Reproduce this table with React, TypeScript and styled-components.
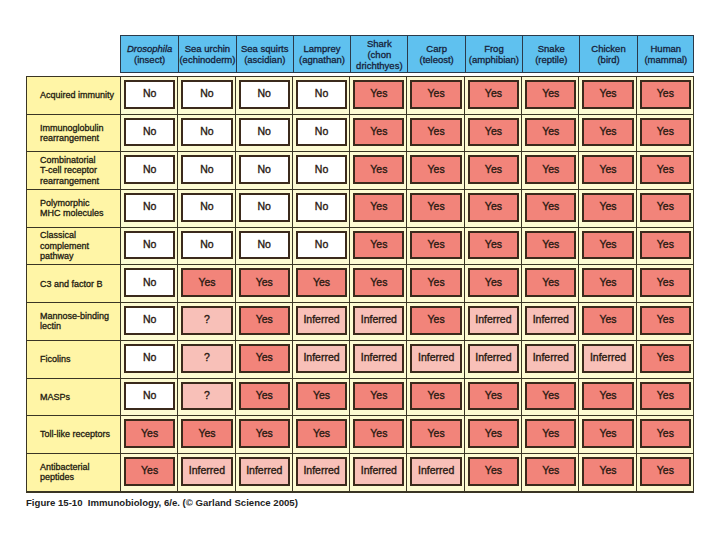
import React from 'react';
import styled, { createGlobalStyle } from 'styled-components';

const GlobalStyle = createGlobalStyle`
  body {
    margin: 0;
    background: #fff;
    font-family: "Liberation Sans", Arial, sans-serif;
  }
`;

const Page = styled.div`
  width: 720px;
  height: 540px;
  padding: 35px 0 0 26px;
  box-sizing: border-box;
`;

const HeaderRow = styled.div`
  display: grid;
  grid-template-columns: repeat(10, 57.3px);
  margin-left: 94px;
  height: 38px;
  background: #5fc1ef;
  border: 1px solid #2b3a4a;
  box-sizing: border-box;
  width: 574px;
`;

const HeaderCell = styled.div<{ $first?: boolean }>`
  display: flex;
  flex-direction: column;
  align-items: center;
  justify-content: center;
  border-left: ${p => (p.$first ? 'none' : '1px solid #2b3a4a')};
  font-size: 9.5px;
  line-height: 11px;
  color: #16223a;
  text-align: center;
  white-space: nowrap;
  -webkit-text-stroke: 0.3px #16223a;
`;

const Table = styled.div`
  display: grid;
  grid-template-columns: 94px repeat(10, 57.3px);
  grid-auto-rows: 37.7px;
  margin-top: 3px;
  width: 668px;
  border: 1px solid #3a3524;
  box-sizing: border-box;
  background: #fdfbd2;
`;

const Label = styled.div`
  display: flex;
  align-items: center;
  padding-left: 13px;
  background: #fff5a6;
  border-bottom: 1px solid #3a3524;
  border-right: 1px solid #3a3524;
  font-size: 9px;
  line-height: 10.5px;
  color: #1e1a10;
  -webkit-text-stroke: 0.3px #1e1a10;
`;

const Slot = styled.div`
  display: flex;
  padding: 3px 2px 5px 3px;
  border-bottom: 1px solid #3a3524;
  border-right: 1px solid #3a3524;
`;

const VALUE_BG: Record<string, string> = {
  Yes: '#f2847a',
  No: '#ffffff',
  Inferred: '#f8c0b8',
  '?': '#f8c0b8',
};

const Box = styled.div<{ $bg: string }>`
  flex: 1;
  display: flex;
  align-items: center;
  justify-content: center;
  background: ${p => p.$bg};
  border: 2px solid #3b2a1c;
  font-size: 10.5px;
  color: #2a1a12;
  -webkit-text-stroke: 0.35px #2a1a12;
  padding-bottom: 2px;
`;

const Caption = styled.div`
  margin-top: 4px;
  font-size: 9.6px;
  font-weight: bold;
  color: #222;
`;

const columns: [React.ReactNode, ...string[]][] = [
  [<i key="d">Drosophila</i>, '(insect)'],
  ['Sea urchin', '(echinoderm)'],
  ['Sea squirts', '(ascidian)'],
  ['Lamprey', '(agnathan)'],
  ['Shark', '(chon', 'drichthyes)'],
  ['Carp', '(teleost)'],
  ['Frog', '(amphibian)'],
  ['Snake', '(reptile)'],
  ['Chicken', '(bird)'],
  ['Human', '(mammal)'],
];

const Y = 'Yes';
const N = 'No';
const I = 'Inferred';
const Q = '?';

const rows: { label: string[]; values: string[] }[] = [
  { label: ['Acquired immunity'], values: [N, N, N, N, Y, Y, Y, Y, Y, Y] },
  { label: ['Immunoglobulin', 'rearrangement'], values: [N, N, N, N, Y, Y, Y, Y, Y, Y] },
  { label: ['Combinatorial', 'T-cell receptor', 'rearrangement'], values: [N, N, N, N, Y, Y, Y, Y, Y, Y] },
  { label: ['Polymorphic', 'MHC molecules'], values: [N, N, N, N, Y, Y, Y, Y, Y, Y] },
  { label: ['Classical', 'complement', 'pathway'], values: [N, N, N, N, Y, Y, Y, Y, Y, Y] },
  { label: ['C3 and factor B'], values: [N, Y, Y, Y, Y, Y, Y, Y, Y, Y] },
  { label: ['Mannose-binding', 'lectin'], values: [N, Q, Y, I, I, Y, I, I, Y, Y] },
  { label: ['Ficolins'], values: [N, Q, Y, I, I, I, I, I, I, Y] },
  { label: ['MASPs'], values: [N, Q, Y, Y, Y, Y, Y, Y, Y, Y] },
  { label: ['Toll-like receptors'], values: [Y, Y, Y, Y, Y, Y, Y, Y, Y, Y] },
  { label: ['Antibacterial', 'peptides'], values: [Y, I, I, I, I, I, Y, Y, Y, Y] },
];

export default function App() {
  return (
    <Page>
      <GlobalStyle />
      <HeaderRow>
        {columns.map((lines, i) => (
          <HeaderCell key={i} $first={i === 0}>
            {lines.map((l, j) => (
              <span key={j}>{l}</span>
            ))}
          </HeaderCell>
        ))}
      </HeaderRow>
      <Table>
        {rows.map((row, r) => (
          <React.Fragment key={r}>
            <Label>
              <div>
                {row.label.map((l, j) => (
                  <div key={j}>{l}</div>
                ))}
              </div>
            </Label>
            {row.values.map((v, c) => (
              <Slot key={c}>
                <Box $bg={VALUE_BG[v]}>{v}</Box>
              </Slot>
            ))}
          </React.Fragment>
        ))}
      </Table>
      <Caption>Figure 15-10&nbsp; Immunobiology, 6/e. (© Garland Science 2005)</Caption>
    </Page>
  );
}
